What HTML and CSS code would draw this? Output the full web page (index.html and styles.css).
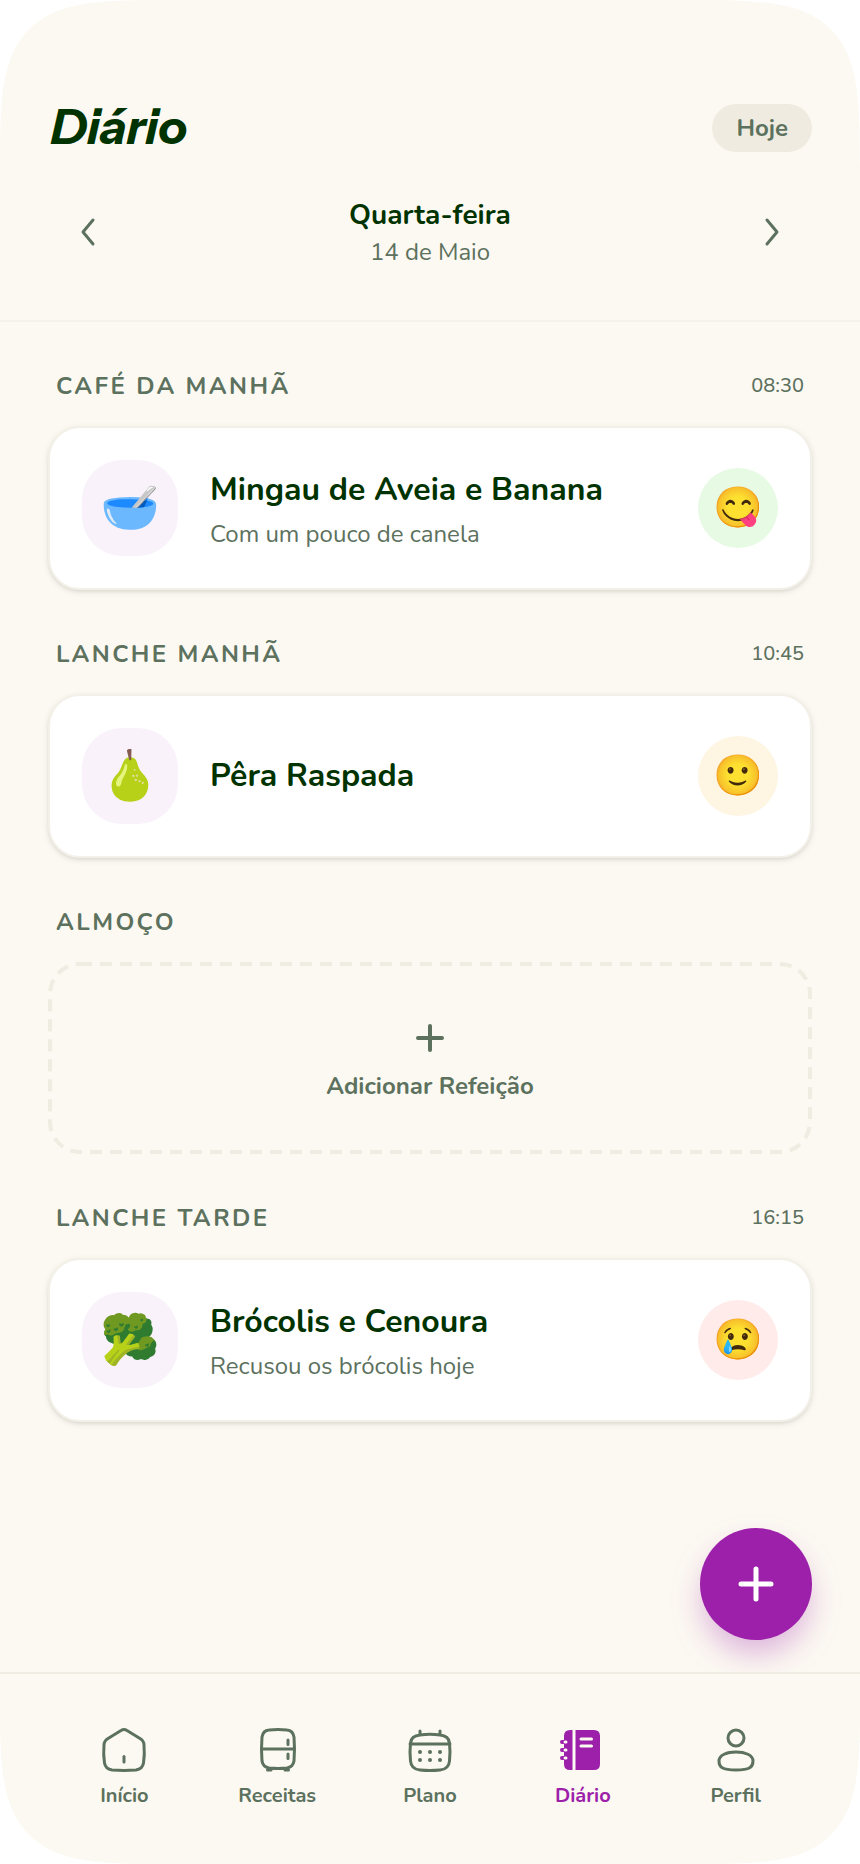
FILE: index.html
```html
<!DOCTYPE html>
<html lang="pt-BR">
  <head>
    <meta charset="UTF-8" />
    <meta name="viewport" content="width=device-width, initial-scale=1.0" />
    <title>Diário</title>
    <link rel="stylesheet" href="styles.css">
  </head>
  <body>
    <div class="app">
      <header class="header">
        <div class="header-top">
          <h1>Diário</h1>
          <button class="today-btn">Hoje</button>
        </div>
        <div class="date-nav">
          <button class="arrow-btn" aria-label="Dia anterior">
            <svg class="icon" viewBox="0 0 48 48"><path d="M29 12 19 24 29 36" /></svg>
          </button>
          <div class="date">
            <p class="weekday">Quarta-feira</p>
            <p class="day">14 de Maio</p>
          </div>
          <button class="arrow-btn" aria-label="Próximo dia">
            <svg class="icon" viewBox="0 0 48 48"><path d="M19 12 29 24 19 36" /></svg>
          </button>
        </div>
      </header>

      <main class="meals">
        <section class="meal">
          <div class="meal-header">
            <h2>Café da Manhã</h2>
            <time>08:30</time>
          </div>
          <div class="card">
            <div class="food">🥣</div>
            <div class="info">
              <h3>Mingau de Aveia e Banana</h3>
              <p>Com um pouco de canela</p>
            </div>
            <div class="mood loved">😋</div>
          </div>
        </section>

        <section class="meal">
          <div class="meal-header">
            <h2>Lanche Manhã</h2>
            <time>10:45</time>
          </div>
          <div class="card">
            <div class="food">🍐</div>
            <div class="info">
              <h3>Pêra Raspada</h3>
            </div>
            <div class="mood liked">🙂</div>
          </div>
        </section>

        <section class="meal">
          <div class="meal-header">
            <h2>Almoço</h2>
          </div>
          <button class="add-meal">
            <svg class="outline"><rect x="2" y="2" rx="30" /></svg>
            <svg class="icon plus" viewBox="0 0 48 48"><path d="M24 12V36M12 24H36" /></svg>
            Adicionar Refeição
          </button>
        </section>

        <section class="meal">
          <div class="meal-header">
            <h2>Lanche Tarde</h2>
            <time>16:15</time>
          </div>
          <div class="card">
            <div class="food">🥦</div>
            <div class="info">
              <h3>Brócolis e Cenoura</h3>
              <p>Recusou os brócolis hoje</p>
            </div>
            <div class="mood refused">😢</div>
          </div>
        </section>
      </main>

      <button class="fab" aria-label="Adicionar">
        <svg class="icon" viewBox="0 0 48 48"><path d="M24 9V39M9 24H39" /></svg>
      </button>

      <nav class="tabs">
        <a href="#inicio">
          <svg class="icon" viewBox="0 0 48 48">
            <path d="M21 4.5Q24 2.5 27 4.5L40 12.5Q44 15 44 19C44.5 25 44.5 31 43.5 37Q42.5 43 36 44Q24 44.8 12 44Q5.5 43 4.5 37C3.5 31 3.5 25 4 19Q4 15 8 12.5Z" />
            <path d="M24 30.5V36" />
          </svg>
          Início
        </a>
        <a href="#receitas">
          <svg class="icon" viewBox="0 0 48 48">
            <path d="M16 4Q25 3 34 4Q40 4.5 41 11Q42 23 41 35Q40 41 34 42Q25 43 16 42Q10 41 9 35Q8 23 9 11Q10 4.5 16 4ZM9 23H41M35 14V18.5M35 28V32.5" />
            <path d="M14.5 44H18M32 44H35.5" />
          </svg>
          Receitas
        </a>
        <a href="#plano">
          <svg class="icon" viewBox="0 0 48 48">
            <path d="M14 9Q24 7.5 34 9C40 9.5 43 12 43.5 17Q44.5 26 43.5 35C43 41 40 43.5 34 44Q24 45 14 44C8 43.5 5 41 4.5 35Q3.5 26 4.5 17C5 12 8 9.5 14 9ZM4 18H44M14 5V8M34 5V8" />
            <g class="solid">
              <circle cx="14" cy="26" r="2" /><circle cx="24" cy="26" r="2" /><circle cx="34" cy="26" r="2" />
              <circle cx="14" cy="34" r="2" /><circle cx="24" cy="34" r="2" /><circle cx="34" cy="34" r="2" />
            </g>
          </svg>
          Plano
        </a>
        <a href="#diario" class="active">
          <svg class="icon" viewBox="0 0 48 48">
            <path class="solid" d="M11 4H35Q41 4 41 10V38Q41 44 35 44H11Q5 44 5 38V10Q5 4 11 4Z" />
            <path class="cut" d="M15 4V44" />
            <path class="cut round" d="M22 13H32.5M22 20H32.5" />
            <g class="solid">
              <rect x="1" y="14" width="8" height="4" rx="2" />
              <rect x="1" y="22" width="8" height="4" rx="2" />
              <rect x="1" y="30" width="8" height="4" rx="2" />
            </g>
            <path class="cut round" d="M6 16H7M6 24H7M6 32H7" />
          </svg>
          Diário
        </a>
        <a href="#perfil">
          <svg class="icon" viewBox="0 0 48 48">
            <circle cx="24" cy="12" r="8" />
            <path d="M24 26C33 26 41 29 41 35C41 41 38 44 24 44C10 44 7 41 7 35C7 29 15 26 24 26Z" />
          </svg>
          Perfil
        </a>
      </nav>
    </div>
  </body>
</html>
```
FILE: styles.css
```css
* {
  box-sizing: border-box;
}

body {
  margin: 0;
  background: #ffffff;
  color: #003300;
  font-family: Nunito, "Open Sans", sans-serif;
}

h1,
h2,
h3,
p {
  margin: 0;
}

button {
  border: none;
  background: none;
  padding: 0;
  font-family: inherit;
  color: inherit;
  cursor: pointer;
}

.app {
  position: relative;
  display: flex;
  flex-direction: column;
  min-height: 100vh;
  overflow: hidden;
  background: #fcf9f2;
  border-radius: 184px;
  corner-shape: squircle;
}

.icon {
  display: block;
  width: 48px;
  height: 48px;
  fill: none;
  stroke: currentColor;
  stroke-width: 3;
  stroke-linecap: round;
  stroke-linejoin: round;
}

.icon .solid {
  fill: currentColor;
  stroke: none;
}

.icon .cut {
  stroke: #fcf9f2;
  stroke-linecap: butt;
}

.icon .round {
  stroke-linecap: round;
}

/* header */
.header {
  padding: 96px 48px 48px;
  border-bottom: 2px solid #f5f2e9;
}

.header-top {
  display: flex;
  justify-content: space-between;
  align-items: center;
  height: 64px;
  margin-bottom: 32px;
}

h1 {
  padding: 0 3px 2px;
  font-family: "Instrument Sans", Inter, sans-serif;
  font-size: 48px;
  font-style: italic;
  font-weight: 700;
  line-height: 62px;
}

.today-btn {
  height: 48px;
  padding: 0 24px;
  border-radius: 24px;
  background: #efebe0;
  color: #5c715e;
  font-size: 24px;
  font-weight: 700;
}

.date-nav {
  display: flex;
  justify-content: space-between;
  align-items: center;
}

.arrow-btn {
  padding: 16px;
  color: #5c715e;
}

.date {
  text-align: center;
}

.weekday {
  font-size: 28px;
  font-weight: 700;
  line-height: 40px;
}

.day {
  color: #5c715e;
  font-size: 24px;
  line-height: 34px;
}

/* meals */
.meals {
  flex: 1;
  display: flex;
  flex-direction: column;
  gap: 48px;
  padding: 48px;
}

.meal-header {
  display: flex;
  justify-content: space-between;
  align-items: center;
  height: 32px;
  padding: 0 8px;
  margin-bottom: 24px;
  color: #5c715e;
}

h2 {
  font-size: 24px;
  font-weight: 700;
  letter-spacing: 0.1em;
  text-transform: uppercase;
}

time {
  font-size: 20px;
  font-weight: 500;
  line-height: 28px;
}

.card {
  display: flex;
  align-items: center;
  gap: 32px;
  padding: 32px;
  background: #ffffff;
  border: 2px solid #f3f0e8;
  border-radius: 32px;
  box-shadow: 0 2px 6px rgba(0, 0, 0, 0.1), 0 2px 4px -2px rgba(0, 0, 0, 0.1);
}

.food,
.mood {
  display: flex;
  justify-content: center;
  align-items: center;
  flex-shrink: 0;
}

.food {
  width: 96px;
  height: 96px;
  border-radius: 40px;
  background: #f9f2fb;
  font-size: 48px;
}

.info {
  flex: 1;
}

h3 {
  font-size: 32px;
  font-weight: 700;
  line-height: 48px;
}

.info p {
  margin-top: 4px;
  color: #5c715e;
  font-size: 24px;
  line-height: 32px;
}

.mood {
  width: 80px;
  height: 80px;
  border-radius: 50%;
  font-size: 40px;
}

.loved {
  background: #e7fae4;
}

.liked {
  background: #fff5e3;
}

.refused {
  background: #ffebea;
}

.add-meal {
  position: relative;
  display: flex;
  flex-direction: column;
  justify-content: center;
  align-items: center;
  gap: 8px;
  width: 100%;
  height: 192px;
  color: #5c715e;
  font-size: 24px;
  font-weight: 700;
  line-height: 32px;
}

.outline {
  position: absolute;
  inset: 0;
  width: 100%;
  height: 100%;
}

.outline rect {
  width: calc(100% - 4px);
  height: calc(100% - 4px);
  fill: none;
  stroke: #efece1;
  stroke-width: 4;
  stroke-dasharray: 12 8;
}

.plus {
  stroke-width: 4;
}

.fab {
  position: absolute;
  right: 48px;
  bottom: 224px;
  display: flex;
  justify-content: center;
  align-items: center;
  width: 112px;
  height: 112px;
  border-radius: 50%;
  background: #9c20a9;
  color: #ffffff;
  box-shadow: 0 16px 32px -4px rgba(156, 32, 169, 0.35);
}

.fab .icon {
  stroke-width: 5;
}

/* bottom tabs */
.tabs {
  position: relative;
  display: flex;
  padding: 52px 48px 48px;
  border-top: 2px solid #f0ede3;
  background: #fcf9f2;
}

.tabs a {
  flex: 1;
  display: flex;
  flex-direction: column;
  align-items: center;
  gap: 8px;
  height: 90px;
  color: #5c715e;
  font-size: 20px;
  font-weight: 700;
  line-height: 28px;
  text-decoration: none;
}

.tabs .active {
  color: #9c20a9;
}
```
